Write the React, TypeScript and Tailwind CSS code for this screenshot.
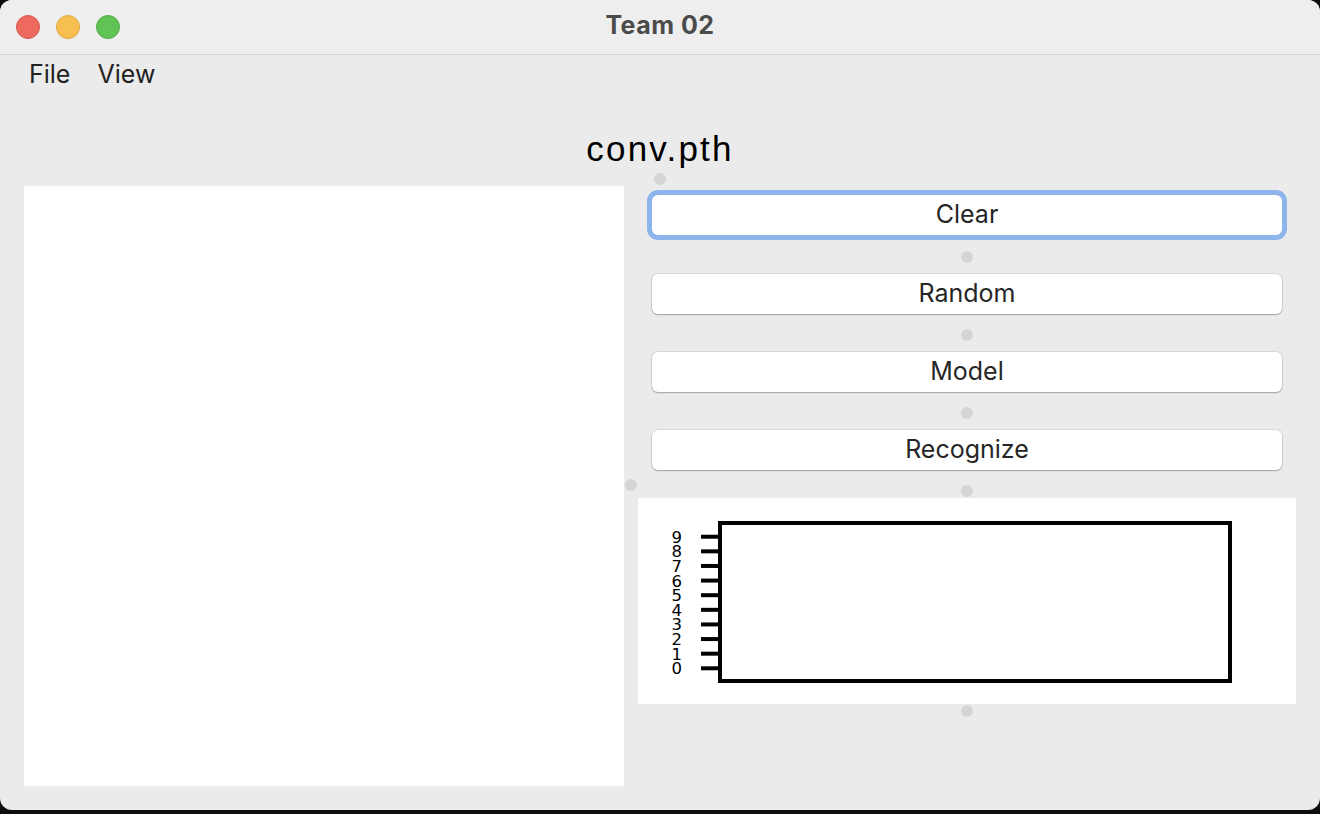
import React from "react";

const Dot = ({ className = "" }: { className?: string }) => (
  <div className={"w-[12px] h-[12px] rounded-full bg-[#d4d4d4] " + className} />
);

const Btn = ({ label, focused = false }: { label: string; focused?: boolean }) => (
  <div
    className={
      "w-[630px] h-[40px] rounded-[6px] bg-white flex items-center justify-center text-[25px] text-[#262626] shadow-[0_0_0_1px_rgba(0,0,0,0.08),0_1px_1.5px_rgba(0,0,0,0.25)] " +
      (focused ? "ring-[5px] ring-[#8db5ec]" : "")
    }
    style={{ fontFamily: "Inter, 'Noto Sans', sans-serif" }}
  >
    {label}
  </div>
);

const Chart = () => {
  const ticks = Array.from({ length: 10 }, (_, i) => 170.3 - i * 14.62);
  return (
    <svg width="658" height="206" viewBox="0 0 658 206">
      <rect x="0" y="0" width="658" height="206" fill="#ffffff" />
      {ticks.map((y, i) => (
        <g key={i}>
          <line x1="63" x2="82" y1={y} y2={y} stroke="#000" strokeWidth="4" />
          <text
            x="44"
            y={y + 6}
            textAnchor="end"
            fontSize="16.5"
            fontFamily="'DejaVu Sans', sans-serif"
            fill="#000"
          >
            {i}
          </text>
        </g>
      ))}
      <rect x="82" y="25" width="510" height="158" fill="none" stroke="#000" strokeWidth="4" />
    </svg>
  );
};

export default function App() {
  return (
    <div className="w-[1320px] h-[814px] bg-[#0e0e0e] overflow-hidden">
      <div className="w-[1320px] h-[810px] bg-[#ebebeb] rounded-[12px] overflow-hidden flex flex-col">
        {/* title bar */}
        <div className="h-[55px] bg-[#eeeeee] border-b border-[#d2d2d2] flex items-center relative shrink-0">
          <div className="flex gap-[16px] pl-[16px]">
            <div className="w-[24px] h-[24px] rounded-full bg-[#ee695e] border border-[#d85a50]" />
            <div className="w-[24px] h-[24px] rounded-full bg-[#f6bf4f] border border-[#dea842]" />
            <div className="w-[24px] h-[24px] rounded-full bg-[#60c454] border border-[#51ad46]" />
          </div>
          <div
            className="absolute left-0 right-0 top-[8px] text-center text-[25px] leading-[34px] font-bold tracking-[0.5px] text-[#4b4b4b]"
            style={{ fontFamily: "Inter, 'Noto Sans', sans-serif" }}
          >
            Team 02
          </div>
        </div>
        {/* menu */}
        <div
          className="h-[40px] flex items-center gap-[27px] pl-[29px] text-[25px] text-[#222]"
          style={{ fontFamily: "Inter, 'Noto Sans', sans-serif" }}
        >
          <span>File</span>
          <span>View</span>
        </div>
        {/* heading */}
        <div
          className="h-[78px] flex items-end justify-center text-[35px] text-black tracking-[2.2px] leading-none pb-[7px]"
          style={{ fontFamily: "'Liberation Sans', Arial, sans-serif" }}
        >
          conv.pth
        </div>
        <div className="flex justify-center h-[12px]">
          <Dot />
        </div>
        {/* body */}
        <div className="flex pt-[1px]">
          <div className="ml-[24px] w-[600px] h-[600px] bg-white" />
          <div className="w-[14px] flex items-center justify-center">
            <Dot className="mb-[2px]" />
          </div>
          <div className="w-[658px] flex flex-col items-center">
            <div className="mt-[9px]">
              <Btn label="Clear" focused />
            </div>
            <Dot className="mt-[16px]" />
            <div className="mt-[11px]">
              <Btn label="Random" />
            </div>
            <Dot className="mt-[15px]" />
            <div className="mt-[11px]">
              <Btn label="Model" />
            </div>
            <Dot className="mt-[15px]" />
            <div className="mt-[11px]">
              <Btn label="Recognize" />
            </div>
            <Dot className="mt-[15px]" />
            <div className="mt-[1px]">
              <Chart />
            </div>
            <Dot className="mt-[1px]" />
          </div>
        </div>
      </div>
    </div>
  );
}
